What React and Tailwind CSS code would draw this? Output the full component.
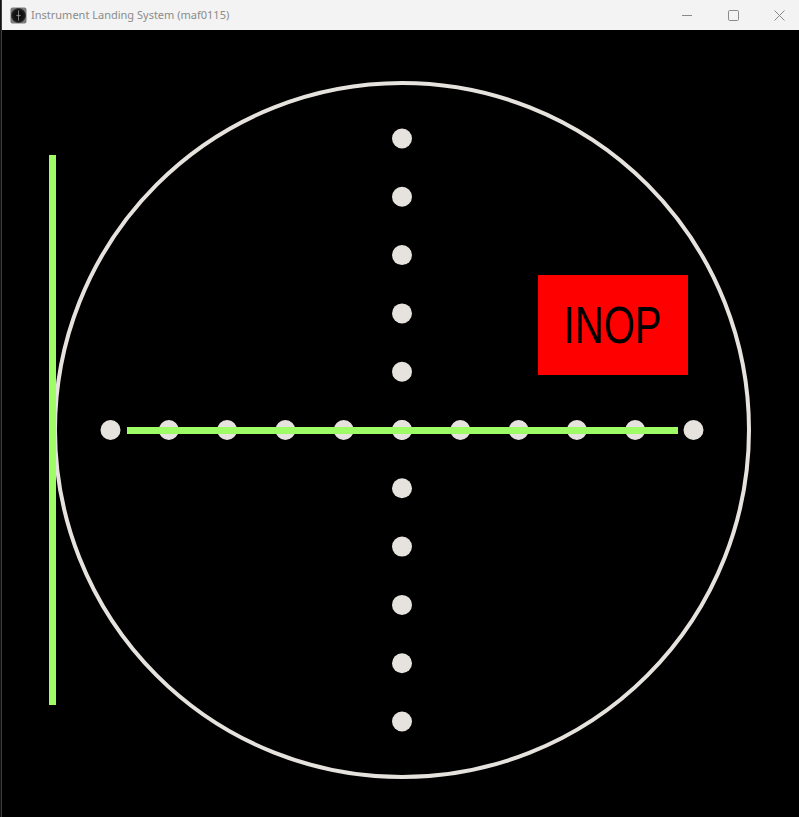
import React from "react";

const STEP = 58.3;
const CX = 402;
const CY = 430;
const idx = [-5, -4, -3, -2, -1, 0, 1, 2, 3, 4, 5];

function TitleIcon() {
  return (
    <svg width="17" height="17" viewBox="0 0 17 17">
      <rect x="0.5" y="0.5" width="16" height="16" rx="2" fill="#7a7a7a" />
      <circle cx="8.5" cy="8.5" r="7" fill="#111" stroke="#3a3a3a" strokeWidth="0.8" />
      <circle cx="8.5" cy="8.5" r="5.6" fill="none" stroke="#2a2a2a" strokeWidth="0.6" />
      <line x1="8.5" y1="3.5" x2="8.5" y2="13.5" stroke="#8a8a8a" strokeWidth="0.9" />
      <line x1="6" y1="8.5" x2="11" y2="8.5" stroke="#6a6a6a" strokeWidth="0.8" />
      <circle cx="8.5" cy="8.5" r="1" fill="#9a9a9a" />
    </svg>
  );
}

function Controls() {
  return (
    <div className="-mr-[3px] flex h-full items-stretch">
      <div className="flex w-[46px] items-center justify-center">
        <svg width="10" height="10" viewBox="0 0 10 10">
          <line x1="0" y1="5.5" x2="10" y2="5.5" stroke="#8a8a8a" strokeWidth="1" />
        </svg>
      </div>
      <div className="flex w-[46px] items-center justify-center">
        <svg width="11" height="11" viewBox="0 0 11 11">
          <rect x="0.5" y="0.5" width="10" height="10" rx="1.2" fill="none" stroke="#8a8a8a" strokeWidth="1" />
        </svg>
      </div>
      <div className="flex w-[46px] items-center justify-center">
        <svg width="11" height="11" viewBox="0 0 11 11">
          <line x1="0.5" y1="0.5" x2="10.5" y2="10.5" stroke="#8a8a8a" strokeWidth="1" />
          <line x1="10.5" y1="0.5" x2="0.5" y2="10.5" stroke="#8a8a8a" strokeWidth="1" />
        </svg>
      </div>
    </div>
  );
}

export default function App() {
  return (
    <div className="flex h-[817px] w-[799px] bg-[#1c1c1c]">
      <div className="w-px bg-[#111]" />
      <div className="w-px bg-[#3c3c3c]" />
      <div className="flex flex-1 flex-col bg-black">
        <div className="flex h-[30px] items-center justify-between overflow-hidden bg-[#f3f3f3]">
          <div className="flex items-center gap-[4px] pl-[8px]">
            <TitleIcon />
            <span
              className="text-[11px] text-[#8b8b8b]"
              style={{ fontFamily: '"Segoe UI", "Noto Sans", "Open Sans", sans-serif' }}
            >
              Instrument Landing System (maf0115)
            </span>
          </div>
          <Controls />
        </div>
        <div className="relative flex-1">
          <svg width="797" height="787" viewBox="2 30 797 787" className="block">
            <circle cx={CX} cy={CY} r="347" fill="none" stroke="#e6e3de" strokeWidth="4" />
            {idx.map((i) => (
              <circle key={"v" + i} cx={CX} cy={CY + i * STEP} r="10" fill="#e6e3de" />
            ))}
            {idx.map((i) => (
              <circle key={"h" + i} cx={CX + i * STEP} cy={CY} r="10" fill="#e6e3de" />
            ))}
            <rect x="127" y="427" width="551" height="7" fill="#9efc66" />
            <rect x="49" y="155" width="7" height="550" fill="#9efc66" />
          </svg>
          <div className="absolute left-[536px] top-[245px] flex h-[100px] w-[150px] items-center justify-center bg-[#ff0000]">
            <span
              className="inline-block scale-x-[0.77] text-[52px] leading-none text-black"
              style={{ fontFamily: '"Liberation Sans", Arial, sans-serif' }}
            >
              INOP
            </span>
          </div>
        </div>
      </div>
    </div>
  );
}
